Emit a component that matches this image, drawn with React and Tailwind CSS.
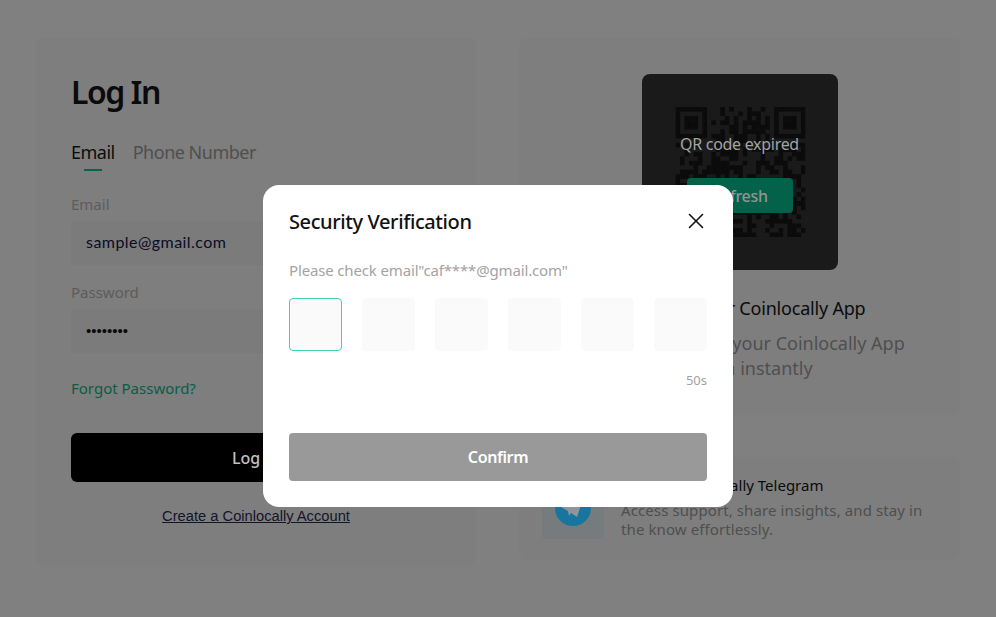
import React from "react";
import { X } from "lucide-react";

const QR_SIZE = 29;

const inFinder = (x, y) => {
  const corners = [
    [0, 0],
    [QR_SIZE - 7, 0],
    [0, QR_SIZE - 7],
  ];
  for (const [cx, cy] of corners) {
    if (x >= cx - 1 && x <= cx + 7 && y >= cy - 1 && y <= cy + 7) {
      const dx = x - cx;
      const dy = y - cy;
      if (dx < 0 || dy < 0 || dx > 6 || dy > 6) return false;
      if (dx === 0 || dy === 0 || dx === 6 || dy === 6) return true;
      return dx >= 2 && dx <= 4 && dy >= 2 && dy <= 4;
    }
  }
  return null;
};

// scrambled modules, the real code can't be read through the overlay
const moduleOn = (x, y) => {
  let h = Math.imul(x + 1, 73856093) ^ Math.imul(y + 1, 19349663);
  h = Math.imul(h ^ (h >>> 13), 1274126177);
  h ^= h >>> 16;
  return (h & 255) < 135;
};

const QrCode = () => {
  const cells = [];
  for (let y = 0; y < QR_SIZE; y++) {
    for (let x = 0; x < QR_SIZE; x++) {
      let on = inFinder(x, y);
      if (on === null) on = moduleOn(x, y);
      if (on) cells.push(<rect key={`${x}-${y}`} x={x} y={y} width="1.02" height="1.02" />);
    }
  }
  return (
    <svg viewBox={`0 0 ${QR_SIZE} ${QR_SIZE}`} className="w-[130px] h-[130px] translate-x-[0.5px]" fill="#0b0b0b">
      {cells}
    </svg>
  );
};

const TelegramIcon = () => (
  <svg viewBox="0 0 36 36" className="w-9 h-9">
    <circle cx="18" cy="18" r="18" fill="#17759f" />
    <path d="M6 17 L28 9 L22 27 L16 23 L14 26 L13 21 Z" fill="#8f9599" />
  </svg>
);

const Field = ({ label, children, className }) => (
  <div className={className}>
    <div className="text-[15px] leading-[20px] text-[#5c5c5c]">{label}</div>
    <div className="mt-[7px] h-[44px] w-[370px] rounded-[4px] bg-[#7b7b7b] px-[15px] pb-[2px] flex items-center font-['Lato',sans-serif] text-[16px] tracking-[0.45px] text-[#0c0c24]">
      {children}
    </div>
  </div>
);

const LoginCard = () => (
  <div className="w-[440px] h-[527px] shrink-0 rounded-lg bg-[#7e7e7e] pl-[35px] pt-[32px]">
    <h1 className="text-[32px] leading-[44px] font-semibold tracking-[-1.5px] text-[#0b0b0b]">Log In</h1>
    <div className="mt-[26px] flex gap-[18px] text-[18px] leading-[24px] tracking-[-0.5px]">
      <div className="relative text-[#0b0b0b]">
        Email
        <span className="absolute left-[13px] top-[29px] w-[18px] h-[2px] bg-[#03664c]" />
      </div>
      <div className="text-[#4f4f4f]">Phone Number</div>
    </div>
    <Field label="Email" className="mt-[30px]">sample@gmail.com</Field>
    <Field label="Password" className="mt-[17px]">
      <span className="mt-[2px] font-['Liberation_Sans',sans-serif] text-[15px] tracking-normal text-[#0b0b0b]">••••••••</span>
    </Field>
    <div className="mt-[25px] text-[15px] leading-[20px] text-[#0b5c46]">Forgot Password?</div>
    <button className="mt-[35px] w-[370px] h-[49px] rounded-[6px] bg-black text-[16px] font-medium text-[#c0c0c0]">
      Log In
    </button>
    <div className="mt-[25px] w-[370px] text-center font-['Liberation_Sans',sans-serif] text-[14.7px] leading-[18px] text-[#14142a]">
      <a className="underline">Create a Coinlocally Account</a>
    </div>
  </div>
);

const QrPanel = () => (
  <div className="h-[377px] rounded-lg bg-[#7e7e7e] pt-[36px] flex flex-col items-center">
    <div className="relative w-[196px] h-[196px] rounded-[8px] bg-[#1a1a1a] flex items-center justify-center">
      <QrCode />
      <div className="absolute inset-0 flex flex-col items-center pt-[59px]">
        <div className="text-[16px] leading-[22px] tracking-[-0.3px] text-[#a3a3a3]">QR code expired</div>
        <div className="mt-[23px] w-[106px] h-[35px] rounded-[4px] bg-[#04624a] flex items-center justify-center text-[16px] font-medium tracking-[-0.3px] text-[#949494]">
          Refresh
        </div>
      </div>
    </div>
    <div className="mt-[26px] text-[18px] leading-[24px] tracking-[-0.2px] text-[#0b0b0b]">Scan with your Coinlocally App</div>
    <div className="mt-[11px] text-center text-[18px] leading-[25px] tracking-normal text-[#4f4f4f]">
      Scan the QR using your Coinlocally App
      <br />
      to log in instantly
    </div>
  </div>
);

const TelegramPanel = () => (
  <div className="mt-[42px] h-[103px] rounded-lg bg-[#7e7e7e] pl-[23px] pr-[30px] flex items-end pb-[21px] gap-[17px]">
    <div className="w-[62px] h-[62px] shrink-0 rounded-[4px] bg-[#767c7e] flex items-center justify-center">
      <TelegramIcon />
    </div>
    <div className="text-[15px] leading-[19px] tracking-[0.1px] text-[#4f4f4f]">
      <div className="tracking-normal text-[#0b0b0b] mb-[6px]">Join the Coinlocally Telegram</div>
      Access support, share insights, and stay in the know effortlessly.
    </div>
  </div>
);

const VerifyModal = () => (
  <div className="absolute left-[263px] top-[185px] w-[470px] h-[322px] rounded-[16px] bg-white px-[26px] pt-[24px]">
    <div className="flex items-center justify-between">
      <h2 className="text-[20px] leading-[26px] font-medium tracking-[-0.4px] text-[#111111]">Security Verification</h2>
      <X size={26} strokeWidth={1.5} className="text-[#111111] -my-1 -mr-[2px] -translate-y-[1px]" />
    </div>
    <p className="mt-[25px] text-[15px] leading-[20px] tracking-[-0.15px] text-[#a3a3a3]">Please check email"caf****@gmail.com"</p>
    <div className="mt-[18px] flex justify-between">
      <div className="w-[53px] h-[53px] rounded-[4px] border border-[#3fd6ad] bg-[#fafafa]" />
      {[0, 1, 2, 3, 4].map((i) => (
        <div key={i} className="w-[53px] h-[53px] rounded-[4px] bg-[#fafafa]" />
      ))}
    </div>
    <div className="mt-[21px] text-right text-[13px] leading-[16px] text-[#a3a3a3]">50s</div>
    <button className="mt-[45px] w-full h-[48px] rounded-[4px] bg-[#999999] text-[16px] font-semibold tracking-[-0.4px] text-white">
      Confirm
    </button>
  </div>
);

export default function App() {
  return (
    <div className="relative w-[996px] h-[617px] overflow-hidden bg-[#808080] font-['Noto_Sans',sans-serif]">
      <div className="flex gap-[43px] pl-[36px] pr-[36px] pt-[38px]">
        <LoginCard />
        <div className="flex-1">
          <QrPanel />
          <TelegramPanel />
        </div>
      </div>
      <VerifyModal />
    </div>
  );
}
